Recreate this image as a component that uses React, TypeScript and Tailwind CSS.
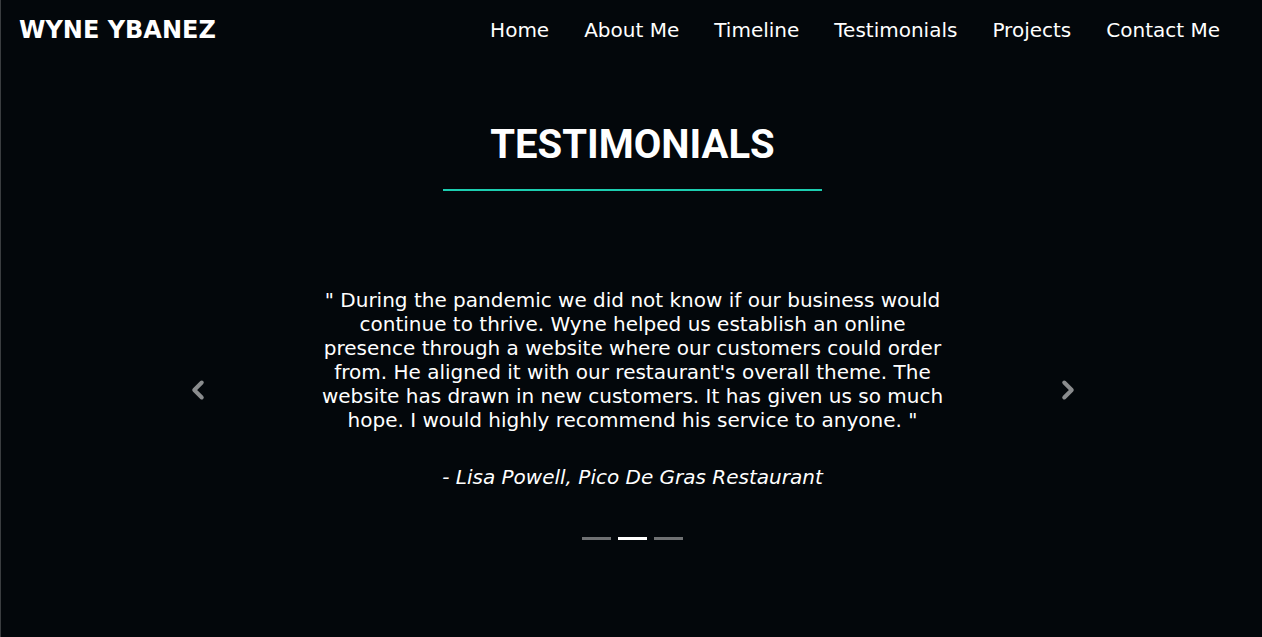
import { ChevronLeft, ChevronRight } from "lucide-react";

const navLinks = ["Home", "About Me", "Timeline", "Testimonials", "Projects", "Contact Me"];

const quoteLines = [
  "\" During the pandemic we did not know if our business would",
  "continue to thrive. Wyne helped us establish an online",
  "presence through a website where our customers could order",
  "from. He aligned it with our restaurant's overall theme. The",
  "website has drawn in new customers. It has given us so much",
  "hope. I would highly recommend his service to anyone. \"",
];

export default function App() {
  return (
    <div className="h-[637px] overflow-hidden border-l border-[#3a3d40] bg-[#03070b] font-['DejaVu_Sans',sans-serif] text-white">
      <header className="flex h-[60px] items-center justify-between pl-[18px] pr-[42px]">
        <span className="text-[24px] font-bold">WYNE YBANEZ</span>
        <nav className="flex items-center gap-[35px] text-[20px]">
          {navLinks.map((l) => (
            <a key={l} href="#" className="text-white">
              {l}
            </a>
          ))}
        </nav>
      </header>

      <section className="flex flex-col items-center pl-[2px]">
        <h2 className="mt-[61px] font-['Roboto',sans-serif] text-[40px] leading-[48px] font-bold">TESTIMONIALS</h2>
        <div className="mt-[20px] h-[2px] w-[379px] bg-[#1ccdb0]" />

        <div className="mt-[97px] flex w-[920px] items-start justify-between">
          <button className="mt-[86px] flex h-[32px] w-[50px] items-center justify-center text-[#8a8c8e]">
            <ChevronLeft size={30} strokeWidth={3.2} />
          </button>

          <div className="flex flex-col items-center">
            <p className="text-center text-[20px] leading-[24px]">
              {quoteLines.map((line, i) => (
                <span key={i} className="block whitespace-nowrap">
                  {line}
                </span>
              ))}
            </p>
            <p className="mt-[33px] text-[20px] leading-[24px] italic">- Lisa Powell, Pico De Gras Restaurant</p>
            <div className="mt-[48px] flex gap-[7px]">
              <span className="h-[3px] w-[29px] bg-[#6f7173]" />
              <span className="h-[3px] w-[29px] bg-white" />
              <span className="h-[3px] w-[29px] bg-[#6f7173]" />
            </div>
          </div>

          <button className="mt-[86px] flex h-[32px] w-[50px] items-center justify-center text-[#8a8c8e]">
            <ChevronRight size={30} strokeWidth={3.2} />
          </button>
        </div>
      </section>
    </div>
  );
}
